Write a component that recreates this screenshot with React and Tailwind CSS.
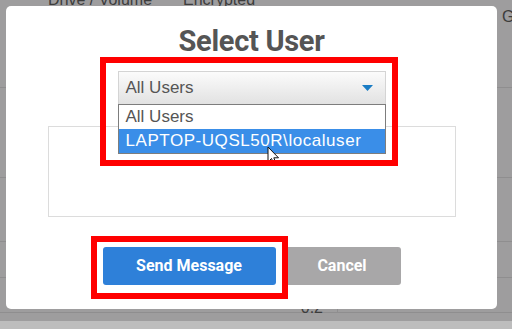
import React from "react";

function Cursor() {
  return (
    <svg width="13" height="20" viewBox="0 0 13 20" className="absolute left-[148px] top-[17px]">
      <path d="M1 1 L1 16 L4.5 12.5 L7 18.5 L9.2 17.5 L6.8 11.8 L11.5 11.8 Z" fill="#fff" stroke="#111" strokeWidth="1" strokeLinejoin="round" />
    </svg>
  );
}

export default function App() {
  return (
    <div className="relative w-[512px] h-[329px] overflow-hidden bg-[#9e9d9e] font-['Liberation_Sans',Arial,sans-serif]">
      {/* background table (dimmed) */}
      <div className="flex flex-col text-[16px] text-[#3c3c3c]">
        <div className="h-[88px] border-b border-[#8f8e8f] relative">
          <div className="flex -mt-[9px] pl-[48px] gap-[31px] leading-[18px]">
            <span>Drive / Volume</span>
            <span>Encrypted</span>
          </div>
          <div className="absolute left-[502px] top-[8px] leading-[18px]">G</div>
        </div>
        <div className="h-[90px] border-b border-[#8f8e8f]" />
        <div className="h-[64px] border-b border-[#8f8e8f]" />
        <div className="h-[36px] border-b border-[#8f8e8f]" />
        <div className="h-[35px] border-b border-[#8f8e8f] flex items-end">
          <div className="w-[337px] h-full flex items-end justify-end pr-[14px] leading-[18px] translate-y-[5px]">0.2</div>
          <div className="h-full border-l border-[#8f8e8f]" />
        </div>
        <div className="h-[8px] mt-[8px] bg-[#bdbdbd]" />
      </div>

      {/* modal */}
      <div className="absolute left-[6px] top-[6px] w-[491px] h-[303px] bg-white rounded-[5px] flex flex-col items-center pt-[19px]">
        <h1 className="font-['Roboto',sans-serif] font-bold text-[29px] leading-[32px] text-[#555] tracking-[-0.3px]">Select User</h1>

        <div className="relative mt-[14px] w-[268px] h-[33px]">
          <div className="w-full h-full border border-[#d4d4d4] border-b-0 bg-gradient-to-b from-[#fbfbfb] to-[#e2e2e2] flex items-center justify-between pl-[7px] pr-[12px] text-[17px] text-[#555]">
            <span>All Users</span>
            <svg width="11" height="6" viewBox="0 0 11 6"><path d="M0 0 H11 L5.5 6 Z" fill="#1a7cc4" /></svg>
          </div>
          {/* dropdown list */}
          <div className="absolute left-0 top-[33px] w-[268px] bg-white border border-[#7d7d7d] text-[17px] z-10">
            <div className="h-[24px] leading-[24px] pl-[7px] text-[#555]">All Users</div>
            <div className="h-[24px] leading-[24px] pl-[7px] bg-[#3a8ee8] text-white relative tracking-[0.55px]">
              LAPTOP-UQSL50R\localuser
              <Cursor />
            </div>
          </div>
          {/* red annotation */}
          <div className="absolute -left-[18px] -top-[14px] w-[298px] h-[109px] border-[6px] border-[#ff0000] z-20 pointer-events-none" />
        </div>

        <div className="mt-[22px] w-[408px] h-[91px] border border-[#dcdcdc]" />

        <div className="mt-[30px] flex gap-[8px] font-['Roboto',sans-serif] font-bold text-[16px] text-white">
          <div className="relative">
            <button className="w-[173px] h-[38px] rounded-[3px] bg-[#2e80d9]">Send Message</button>
            <div className="absolute -left-[12px] -top-[11px] w-[197px] h-[63px] border-[6px] border-[#ff0000] z-20" />
          </div>
          <button className="w-[117px] h-[38px] rounded-[3px] bg-[#a8a7a8]">Cancel</button>
        </div>
      </div>
    </div>
  );
}
